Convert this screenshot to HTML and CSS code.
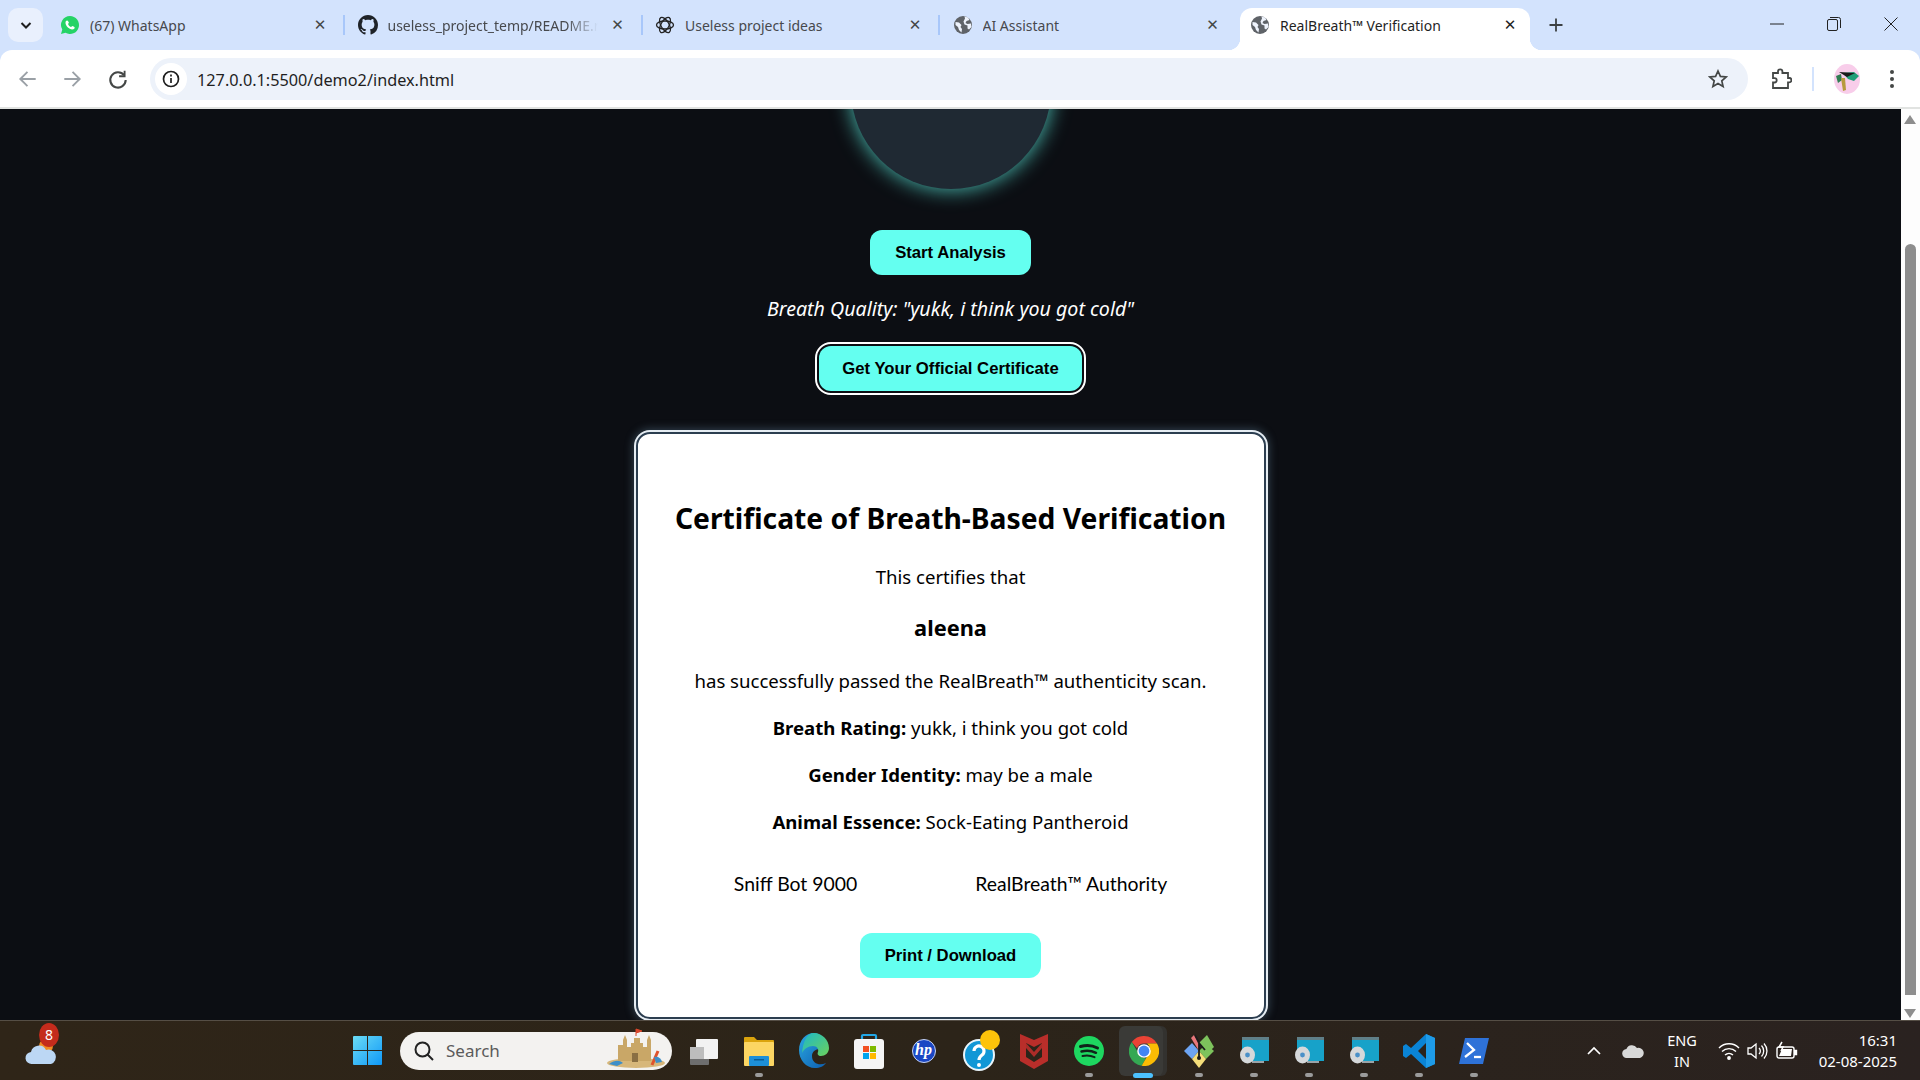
FILE: index.html
```html
<!DOCTYPE html>
<html lang="en">
<head>
  <meta charset="UTF-8">
  <meta name="viewport" content="width=device-width, initial-scale=1.0">
  <title>RealBreath Verification</title>
  <link rel="stylesheet" href="styles.css">
</head>
<body>
  <svg class="defs" width="0" height="0">
    <symbol id="globe" viewBox="0 0 20 20">
      <circle cx="10" cy="10" r="9" fill="#5f6368"/>
      <path d="M2.500 7l3.500.5 2.500 2.500-1 2 1.500 2-.5 3.500-2.500-2.500-1-3-2.500-2zM11.500 1.500l3.500 1 1.500 2.500-3 1-1 2 2 1 3.500-.5.500 3.500-2.500 2.500-1.500-1v-3l-3-1-1-3 1.500-3z" fill="#eef3fc"/>
    </symbol>
    <symbol id="disc" viewBox="0 0 32 32">
      <rect x="4" y="2" width="27" height="24" fill="#17a2c9"/>
      <rect x="4" y="2" width="27" height="3" fill="#5f7f88"/>
      <rect x="14" y="26" width="12" height="2" fill="#9aa3a8"/>
      <ellipse cx="9.500" cy="20" rx="7.500" ry="8.500" fill="#d5d8da"/>
      <circle cx="9.500" cy="20" r="2.400" fill="#4a90c8"/>
    </symbol>
  </svg>

  <div class="tabstrip">
    <button class="tab-search">
      <svg width="14" height="14" viewBox="0 0 14 14"><path d="M2.500 5l4.500 4.500L11.500 5" fill="none" stroke="#1f1f1f" stroke-width="2"/></svg>
    </button>
    <div class="tabs">
      <div class="tab">
        <svg class="favicon" viewBox="0 0 20 20">
          <path d="M10 1a9 9 0 0 0-7.700 13.600L1 19l4.500-1.200A9 9 0 1 0 10 1z" fill="#25d366"/>
          <path d="M7 5.500c-.6 0-1.500.8-1.500 2.300 0 3 3.500 6.700 6.700 6.700 1.500 0 2.500-1 2.500-2 0-.5-2-1.500-2.400-1.500-.4 0-.8 1-1.200 1-.8 0-3-2-3-3 0-.4.800-.8.800-1.200 0-.5-.9-2.300-1.900-2.300z" fill="#fff"/>
        </svg>
        <span class="tab-title">(67) WhatsApp</span>
        <span class="tab-x">✕</span>
      </div>
      <div class="tab">
        <svg class="favicon" viewBox="0 0 16 16"><path fill="#1f2328" d="M8 0C3.580 0 0 3.580 0 8c0 3.540 2.290 6.530 5.470 7.590.4.070.55-.17.55-.38 0-.19-.01-.82-.01-1.490-2.010.37-2.530-.49-2.690-.94-.09-.23-.48-.94-.82-1.130-.28-.15-.68-.52-.01-.53.63-.01 1.080.58 1.230.82.720 1.210 1.870.87 2.330.66.070-.52.28-.87.51-1.070-1.780-.2-3.640-.89-3.640-3.950 0-.87.31-1.590.82-2.150-.08-.2-.36-1.020.08-2.120 0 0 .67-.21 2.200.82.64-.18 1.320-.27 2-.27.68 0 1.360.09 2 .27 1.530-1.040 2.200-.82 2.200-.82.44 1.100.16 1.920.08 2.120.51.56.82 1.270.82 2.150 0 3.070-1.870 3.750-3.650 3.950.29.25.54.73.54 1.480 0 1.070-.01 1.930-.01 2.200 0 .21.15.46.55.38A8.013 8.013 0 0 0 16 8c0-4.420-3.580-8-8-8z"/></svg>
        <span class="tab-title tab-title-fade">useless_project_temp/README.md</span>
        <span class="tab-x">✕</span>
      </div>
      <div class="tab">
        <svg class="favicon" viewBox="0 0 20 20" fill="none" stroke="#222" stroke-width="1.300">
          <ellipse cx="10" cy="10" rx="8.500" ry="4"/>
          <ellipse cx="10" cy="10" rx="8.500" ry="4" transform="rotate(60 10 10)"/>
          <ellipse cx="10" cy="10" rx="8.500" ry="4" transform="rotate(120 10 10)"/>
        </svg>
        <span class="tab-title">Useless project ideas</span>
        <span class="tab-x">✕</span>
      </div>
      <div class="tab">
        <svg class="favicon"><use href="#globe"/></svg>
        <span class="tab-title">AI Assistant</span>
        <span class="tab-x">✕</span>
      </div>
      <div class="tab tab-active">
        <svg class="favicon"><use href="#globe"/></svg>
        <span class="tab-title">RealBreath™ Verification</span>
        <span class="tab-x">✕</span>
      </div>
    </div>
    <svg class="tab-plus" width="16" height="16" viewBox="0 0 16 16"><path d="M8 1.500v13M1.500 8h13" stroke="#3c4043" stroke-width="1.800"/></svg>
    <div class="win-controls">
      <svg width="14" height="14" viewBox="0 0 14 14"><path d="M0 7h14" stroke="#222" stroke-width="1"/></svg>
      <svg width="14" height="14" viewBox="0 0 14 14" fill="none" stroke="#222"><rect x=".5" y="2.500" width="10" height="11" rx="1.500"/><path d="M3 .5h8.500a2 2 0 0 1 2 2V11"/></svg>
      <svg width="14" height="14" viewBox="0 0 14 14"><path d="M.5.5l13 13M13.500.5l-13 13" stroke="#222"/></svg>
    </div>
  </div>

  <div class="toolbar">
    <svg class="tool" viewBox="0 0 20 20" fill="none" stroke="#9aa0a6" stroke-width="1.700"><path d="M17 10H3.500M9.500 3.500L3 10l6.500 6.500"/></svg>
    <svg class="tool" viewBox="0 0 20 20" fill="none" stroke="#9aa0a6" stroke-width="1.700"><path d="M3 10h13.500M10.500 3.500L17 10l-6.500 6.500"/></svg>
    <svg class="tool" viewBox="0 0 20 20" fill="none" stroke="#444746" stroke-width="1.900"><path d="M15.500 6.500A7 7 0 1 0 17 11"/><path d="M16 2.500v5h-5" stroke-width="1.700"/></svg>
    <div class="omnibox">
      <span class="info-chip">
        <svg width="18" height="18" viewBox="0 0 18 18" fill="none" stroke="#1f1f1f" stroke-width="1.700"><circle cx="9" cy="9" r="7.500"/><path d="M9 8v5M9 4.500v2"/></svg>
      </span>
      <span class="url">127.0.0.1:5500/demo2/index.html</span>
      <svg class="star" width="20" height="20" viewBox="0 0 20 20" fill="none" stroke="#444746" stroke-width="1.700"><path d="M10 2l2.400 5.400 5.800.6-4.400 3.900 1.300 5.700-5.100-3-5.100 3 1.300-5.700L1.800 8l5.800-.6z"/></svg>
    </div>
    <svg class="tool tool-ext" viewBox="0 0 22 22" fill="none" stroke="#444746" stroke-width="1.800"><path d="M3 5h5V3.500a2.200 2.200 0 0 1 4.400 0V5H18v5h1.200a2.200 2.200 0 0 1 0 4.400H18V20H3v-5.500h1.500a2.200 2.200 0 0 0 0-4.400H3z"/></svg>
    <span class="tool-sep"></span>
    <svg class="avatar" viewBox="0 0 26 30">
      <ellipse cx="13" cy="15" rx="13" ry="15" fill="#f8cdea"/>
      <path d="M9 9l11-1 5 4-5 5-6-2z" fill="#1f9f78"/>
      <path d="M5 8l16 1-8 4z" fill="#1a1a1a"/>
      <path d="M2 12l5-2 1 6-4 3z" fill="#2f7d52"/>
      <path d="M7 14l2 13 3-1-1-12z" fill="#b89a3c"/>
    </svg>
    <svg class="tool-menu" width="6" height="20" viewBox="0 0 6 20" fill="#444746"><circle cx="3" cy="3" r="2"/><circle cx="3" cy="10" r="2"/><circle cx="3" cy="17" r="2"/></svg>
  </div>

  <div class="viewport">
    <main class="page">
      <div class="breath-circle"></div>
      <button class="btn btn-start">Start Analysis</button>
      <p class="quality">Breath Quality: "yukk, i think you got cold"</p>
      <button class="btn btn-cert">Get Your Official Certificate</button>

      <section class="certificate">
        <h2>Certificate of Breath-Based Verification</h2>
        <p>This certifies that</p>
        <h3>aleena</h3>
        <p>has successfully passed the RealBreath™ authenticity scan.</p>
        <p><strong>Breath Rating:</strong> yukk, i think you got cold</p>
        <p><strong>Gender Identity:</strong> may be a male</p>
        <p><strong>Animal Essence:</strong> Sock-Eating Pantheroid</p>
        <div class="signatures">
          <span>Sniff Bot 9000</span>
          <span>RealBreath™ Authority</span>
        </div>
        <button class="btn btn-print">Print / Download</button>
      </section>
    </main>
    <div class="scrollbar">
      <span class="arrow-up"></span>
      <span class="thumb"></span>
      <span class="arrow-down"></span>
    </div>
  </div>

  <footer class="taskbar">
    <div class="tb-weather">
      <svg width="36" height="36" viewBox="0 0 36 36">
        <circle cx="22" cy="13" r="7" fill="#f08a24"/>
        <path d="M8 31a6 6 0 0 1-1-12 8 8 0 0 1 15-2 7 7 0 0 1 5 14z" fill="#bcd7f4"/>
      </svg>
      <span class="weather-badge">8</span>
    </div>
    <div class="tb-cell">
      <svg width="29" height="29" viewBox="0 0 29 29">
        <defs><linearGradient id="win" x1="0" y1="0" x2="1" y2="1"><stop offset="0" stop-color="#6bdcf5"/><stop offset="1" stop-color="#0f98f8"/></linearGradient></defs>
        <path d="M0 1a1 1 0 0 1 1-1h13v14H0zM15 0h13a1 1 0 0 1 1 1v13H15zM0 15h14v14H1a1 1 0 0 1-1-1zM15 15h14v13a1 1 0 0 1-1 1H15z" fill="url(#win)"/>
      </svg>
    </div>
    <div class="tb-search">
      <svg width="22" height="22" viewBox="0 0 22 22" fill="none" stroke="#222" stroke-width="2"><circle cx="9.500" cy="9.500" r="7"/><path d="M14.500 14.500l5.500 5.500"/></svg>
      <span class="search-label">Search</span>
      <svg class="castle" width="60" height="42" viewBox="0 0 60 42">
        <ellipse cx="30" cy="36" rx="29" ry="5" fill="#d7b77a"/>
        <path d="M3 37c6-4 10-4 14-1l-6 3z" fill="#3e8fc8"/>
        <path d="M12 34V18h5v-5l2-5 2 5v7h4v-4h3v-5h6v5h3v4h4v-7l2-5 2 5v21z" fill="#c9a767"/>
        <rect x="26" y="26" width="6" height="9" fill="#8a6f43"/>
        <path d="M30 9V2l6 2-6 2" fill="#d9472b" stroke="#d9472b"/>
        <path d="M46 38l6-14" stroke="#e0532c" stroke-width="3"/>
        <path d="M48 30c4-1 7 1 8 5l-6 1z" fill="#3e8fc8"/>
      </svg>
    </div>
    <div class="tb-cell">
      <svg width="32" height="32" viewBox="0 0 32 32">
        <rect x="2" y="12" width="19" height="18" rx="1" fill="#6e6e6e"/>
        <rect x="8" y="4" width="22" height="20" rx="1" fill="#f2f2f2"/>
        <rect x="2" y="12" width="14" height="12" fill="#bdbdbd"/>
      </svg>
    </div>
    <div class="tb-cell tb-open">
      <svg width="30" height="32" viewBox="0 0 30 32">
        <path d="M0 3a1 1 0 0 1 1-1h9l3 3h16a1 1 0 0 1 1 1v6H0z" fill="#dba40d"/>
        <rect y="7" width="30" height="24" rx="1" fill="#fcd663"/>
        <rect x="5" y="21" width="20" height="10" rx="1" fill="#1d8fd8"/>
        <rect x="10" y="24" width="10" height="1.500" fill="#0b5c94"/>
      </svg>
    </div>
    <div class="tb-cell">
      <svg width="30" height="37" viewBox="0 0 30 37">
        <defs>
          <linearGradient id="edge" x1="0" y1="0" x2="1" y2="1"><stop offset="0" stop-color="#2ba7e2"/><stop offset="1" stop-color="#0d5fb0"/></linearGradient>
          <linearGradient id="edge2" x1="0" y1="0" x2="1" y2="1"><stop offset="0" stop-color="#1cb8c8"/><stop offset="1" stop-color="#6cd25c"/></linearGradient>
        </defs>
        <path d="M15 1C7 1 0 8 0 18c0 10 7 18 16 18 5 0 9-2 11-5-6 3-14 1-14-7 0-4 3-7 8-7 3 0 4 1 4-2C25 7 21 1 15 1z" fill="url(#edge)"/>
        <path d="M15 1c8 0 15 7 15 15 0 5-4 8-8 8-3 0-4-2-3-4 1-3-1-6-5-6-5 0-9 3-11 7C4 9 8 1 15 1z" fill="url(#edge2)"/>
      </svg>
    </div>
    <div class="tb-cell">
      <svg width="30" height="36" viewBox="0 0 30 36">
        <path d="M8 8V3a1 1 0 0 1 1-1h12a1 1 0 0 1 1 1v5" fill="none" stroke="#22a7e6" stroke-width="2.200"/>
        <rect y="6" width="30" height="30" rx="3" fill="#f5f5f5"/>
        <rect x="9" y="13" width="6" height="6" fill="#f25022"/><rect x="16" y="13" width="6" height="6" fill="#7fba00"/>
        <rect x="9" y="20" width="6" height="6" fill="#00a4ef"/><rect x="16" y="20" width="6" height="6" fill="#ffb900"/>
      </svg>
    </div>
    <div class="tb-cell">
      <span class="hp-logo">hp</span>
    </div>
    <div class="tb-cell">
      <svg class="help-icon" width="40" height="44" viewBox="0 0 40 44">
        <circle cx="16" cy="26" r="15" fill="#1197d6" stroke="#e9f4fa" stroke-width="2"/>
        <path d="M11 22a5 5 0 1 1 8 4c-2 1.500-3 2.500-3 5" fill="none" stroke="#fff" stroke-width="3.200"/>
        <circle cx="16" cy="36" r="2" fill="#fff"/>
        <circle cx="27" cy="11" r="10" fill="#fdc30a"/>
      </svg>
    </div>
    <div class="tb-cell">
      <svg width="28" height="36" viewBox="0 0 28 36">
        <path d="M0 1l14 6 14-6v27l-14 8-14-8z" fill="#b92e2a"/>
        <path d="M6 10l8 4 8-4v14l-8 5-8-5z" fill="#2b2419"/>
        <path d="M6 10l8 9 8-9v5l-8 9-8-9z" fill="#b92e2a" opacity=".9"/>
      </svg>
    </div>
    <div class="tb-cell tb-open">
      <svg width="30" height="30" viewBox="0 0 30 30" fill="none" stroke="#10231a" stroke-linecap="round">
        <circle cx="15" cy="15" r="15" fill="#1ed760" stroke="none"/>
        <path d="M6.500 10.500c6-1.700 12-1.200 17 1.500" stroke-width="3"/>
        <path d="M7.500 15.500c5-1.300 10-.9 14.500 1.300" stroke-width="2.500"/>
        <path d="M8.500 20c4-1 8-.7 12 1.200" stroke-width="2"/>
      </svg>
    </div>
    <div class="tb-cell tb-active">
      <svg width="30" height="30" viewBox="0 0 30 30">
        <path d="M15 0a15 15 0 0 1 13 7.500H15a7.500 7.500 0 0 0-7 4.800L2.800 6A15 15 0 0 1 15 0z" fill="#ea4335"/>
        <path d="M2.800 6L9 16.500A7.500 7.500 0 0 0 17 22.200L12.600 29.800A15 15 0 0 1 2.800 6z" fill="#34a853"/>
        <path d="M28 7.500A15 15 0 0 1 12.600 29.800L19 19a7.500 7.500 0 0 0-1-11.500z" fill="#fbbc04"/>
        <circle cx="15" cy="15" r="6.800" fill="#fff"/><circle cx="15" cy="15" r="5.400" fill="#4285f4"/>
      </svg>
    </div>
    <div class="tb-cell tb-open">
      <svg width="30" height="36" viewBox="0 0 30 36">
        <path d="M15 10l8-8 7 12-7 7z" fill="#7dc25c"/>
        <path d="M15 10l-5-8-3 3 8 13z" fill="#e8777b"/>
        <path d="M0 18l8-8 7 8-7 8z" fill="#6da4f2"/>
        <path d="M15 18l7-7 8 7-8 8z" fill="#7dc25c"/>
        <path d="M8 26l7-8 7 8-7 9z" fill="#f5de7a"/>
        <path d="M11 2l4 8M15 10v15M15 10l6 7" stroke="#1a1a1a" stroke-width="1.800" fill="none"/>
        <circle cx="15" cy="25" r="2" fill="#1a1a1a"/>
      </svg>
    </div>
    <div class="tb-cell tb-open"><svg width="32" height="32"><use href="#disc"/></svg></div>
    <div class="tb-cell tb-open"><svg width="32" height="32"><use href="#disc"/></svg></div>
    <div class="tb-cell tb-open"><svg width="32" height="32"><use href="#disc"/></svg></div>
    <div class="tb-cell tb-open">
      <svg width="32" height="34" viewBox="0 0 32 34">
        <path d="M23 0l9 4v26l-9 4L8 20l-5 4-3-2v-10l3-2 5 4zM23 9l-8 8 8 8z" fill="#0a84d6"/>
        <path d="M23 0l9 4v26l-9 4z" fill="#1e9be8"/>
      </svg>
    </div>
    <div class="tb-cell tb-open">
      <svg width="30" height="26" viewBox="0 0 30 26">
        <path d="M6 0h24l-6 26H0z" fill="#2e72d8"/>
        <path d="M8 5l7 7-9 7" fill="none" stroke="#fff" stroke-width="2.300"/>
        <path d="M15 19h7" stroke="#fff" stroke-width="2.300"/>
      </svg>
    </div>

    <div class="tray">
      <div class="tray-cell tray-chevron">
        <svg width="16" height="10" viewBox="0 0 16 10" fill="none" stroke="#fff" stroke-width="1.700"><path d="M2 8l6-6 6 6"/></svg>
      </div>
      <div class="tray-cell tray-cloud">
        <svg width="22" height="14" viewBox="0 0 22 14"><path d="M5 14a4.500 4.500 0 0 1-.6-9A6 6 0 0 1 15 4a5 5 0 0 1 3 10z" fill="#d8d8d8"/></svg>
      </div>
      <div class="tray-cell tray-lang"><span>ENG</span><span>IN</span></div>
      <div class="tray-cell tray-icon">
        <svg width="22" height="18" viewBox="0 0 22 18" fill="none" stroke="#fff" stroke-width="1.400"><path d="M1 6a14 14 0 0 1 20 0M4 9.500a10 10 0 0 1 14 0M7 13a6 6 0 0 1 8 0"/><circle cx="11" cy="16" r="1.200" fill="#fff"/></svg>
      </div>
      <div class="tray-cell tray-icon">
        <svg width="22" height="18" viewBox="0 0 22 18" fill="none" stroke="#fff" stroke-width="1.300"><path d="M1 6h3l5-4v14l-5-4H1z"/><path d="M12 6a4 4 0 0 1 0 6M14.500 3.500a8 8 0 0 1 0 11M17 1.500a11 11 0 0 1 0 15"/></svg>
      </div>
      <div class="tray-cell tray-icon">
        <svg width="22" height="20" viewBox="0 0 22 20" fill="none" stroke="#fff" stroke-width="1.400"><rect x="1" y="6" width="17" height="11" rx="2"/><path d="M18 9.500h2.500v4H18" fill="#fff"/><path d="M3 15l3-7h10l-1 7z" fill="#fff" stroke="none"/><path d="M6 1L3 6h4l-2 4" stroke-width="1.500"/></svg>
      </div>
      <div class="tray-clock"><span>16:31</span><span>02-08-2025</span></div>
    </div>
  </footer>
</body>
</html>
```

FILE: styles.css
```css
* {
  box-sizing: border-box;
}
html, body {
  margin: 0;
  height: 100%;
  overflow: hidden;
}
body {
  display: flex;
  flex-direction: column;
  width: 1920px;
  height: 1080px;
  font-family: 'Noto Sans', sans-serif;
  background-color: #d3e3fd;
}
.defs {
  position: absolute;
}

/* tab strip */
.tabstrip {
  display: flex;
  align-items: flex-end;
  height: 50px;
  flex: none;
}
.tab-search {
  align-self: flex-start;
  width: 35px;
  height: 34px;
  margin: 8px 7px 0 8px;
  padding: 0;
  border: 0;
  border-radius: 10px;
  background-color: #e9f0fd;
  display: flex;
  align-items: center;
  justify-content: center;
}
.tabs {
  display: flex;
  gap: 7.5px;
}
.tab {
  position: relative;
  display: flex;
  align-items: center;
  width: 290px;
  height: 42px;
  padding: 0 10px 8px;
  color: #47494d;
  font-size: 14px;
}
.tab:not(.tab-active):not(:nth-child(4))::after {
  content: '';
  position: absolute;
  right: -5px;
  top: 7px;
  width: 2px;
  height: 20px;
  background-color: #a8c7fa;
}
.tab-active {
  background-color: #fff;
  border-radius: 12px 12px 0 0;
  color: #1f1f1f;
}
.tab-active::before,
.tab-active::after {
  content: '';
  position: absolute;
  bottom: 0;
  width: 12px;
  height: 12px;
}
.tab-active::before {
  left: -12px;
  background: radial-gradient(circle at 0 0, transparent 12px, #fff 12.500px);
}
.tab-active::after {
  right: -12px;
  background: radial-gradient(circle at 100% 0, transparent 12px, #fff 12.500px);
}
.favicon {
  width: 20px;
  height: 20px;
  flex: none;
  margin-right: 10px;
}
.tab-title {
  flex: 1;
  overflow: hidden;
  white-space: nowrap;
}
.tab-title-fade {
  -webkit-mask-image: linear-gradient(to right, #000 85%, transparent 100%);
  mask-image: linear-gradient(to right, #000 85%, transparent 100%);
}
.tab-x {
  width: 20px;
  margin-left: 10px;
  text-align: center;
  font-size: 15px;
  color: #444746;
  font-family: 'DejaVu Sans', sans-serif;
}
.tab-active .tab-x {
  color: #1f1f1f;
}
.tab-plus {
  margin: 0 0 17px 18px;
}
.win-controls {
  display: flex;
  gap: 43px;
  align-items: center;
  align-self: flex-start;
  margin: 17px 22px 0 auto;
}

/* address bar */
.toolbar {
  display: flex;
  align-items: center;
  height: 59px;
  flex: none;
  padding: 1px 0 0 17px;
  background-color: #fff;
  border-radius: 12px 12px 0 0;
  border-bottom: 2px solid #e1e3e1;
}
.tool {
  width: 22px;
  height: 22px;
  flex: none;
  margin-right: 22px;
}
.tool:nth-child(2) {
  margin-right: 24px;
}
.omnibox {
  display: flex;
  align-items: center;
  width: 1598px;
  height: 42px;
  padding: 0 20px 0 5px;
  background-color: #edf2fa;
  border-radius: 21px;
  flex: none;
  margin-left: -1px;
}
.info-chip {
  display: flex;
  align-items: center;
  justify-content: center;
  width: 32px;
  height: 32px;
  border-radius: 50%;
  background-color: #fff;
}
.url {
  flex: 1;
  margin-left: 10px;
  padding-top: 1px;
  font-size: 16.250px;
  color: #1f1f1f;
}
.tool-ext {
  margin: 0 20px 0 22px;
}
.tool-sep {
  width: 2px;
  height: 24px;
  background-color: #d3e3fd;
}
.avatar {
  width: 26px;
  height: 30px;
  margin-left: 20px;
}
.tool-menu {
  margin-left: 29px;
}

/* page */
.viewport {
  display: flex;
  height: 911px;
  flex: none;
  background-color: #0c0e13;
  overflow: hidden;
}
.page {
  display: flex;
  flex-direction: column;
  align-items: center;
  width: 1901px;
  flex: none;
  color: #fff;
}
.breath-circle {
  width: 200px;
  height: 200px;
  flex: none;
  margin-top: -120px;
  border-radius: 50%;
  background-color: #1f2933;
  box-shadow: 0 0 20px 1px rgba(100, 255, 240, 0.7);
}
.btn {
  border: 0;
  border-radius: 12px;
  background-color: #64fff0;
  color: #000;
  font-family: 'Liberation Sans', sans-serif;
  font-size: 16.700px;
  font-weight: bold;
  height: 45px;
  flex: none;
}
.btn-start {
  width: 161px;
  margin-top: 41px;
}
.quality {
  margin: 19px 0 0;
  font-size: 19.600px;
  font-style: italic;
  line-height: 30px;
}
.btn-cert {
  width: 263px;
  margin-top: 22px;
  outline: 2px solid #fff;
  outline-offset: 2px;
}
.certificate {
  display: flex;
  flex-direction: column;
  align-items: center;
  width: 630px;
  height: 587px;
  margin-top: 41px;
  padding-top: 64px;
  background-color: #fff;
  border: 2px solid #2c3e50;
  border-radius: 14px;
  box-shadow: 0 0 0 2px #e6edf3, 0 0 8px 3px rgba(120, 160, 190, 0.35);
  color: #000;
  flex-shrink: 0;
}
.certificate h2 {
  margin: 0 0 6px;
  font-size: 28.250px;
  line-height: 40px;
}
.certificate p {
  margin: 18px 0 0;
  font-size: 18.600px;
  line-height: 29px;
}
.certificate h3 {
  margin: 22px 0 5px;
  font-size: 21.800px;
  line-height: 30px;
}
.signatures {
  display: flex;
  gap: 118px;
  margin-top: 34px;
  font-family: 'Lato', sans-serif;
  font-size: 19.400px;
  line-height: 28px;
}
.btn-print {
  width: 181px;
  margin-top: 35px;
}

/* scrollbar */
.scrollbar {
  position: relative;
  flex: 1;
  background-color: #fdfdfd;
}
.arrow-up,
.arrow-down {
  position: absolute;
  left: 3px;
  width: 0;
  height: 0;
  border-left: 6px solid transparent;
  border-right: 6px solid transparent;
}
.arrow-up {
  top: 6px;
  border-bottom: 9px solid #8d8d8d;
}
.arrow-down {
  bottom: 2px;
  border-top: 9px solid #8d8d8d;
}
.thumb {
  position: absolute;
  top: 135px;
  left: 4px;
  width: 11px;
  height: 751px;
  border-radius: 6px 6px 0 0;
  background-color: #8d8d8d;
}

/* taskbar */
.taskbar {
  display: flex;
  align-items: center;
  height: 60px;
  flex: none;
  background: linear-gradient(to right, #2f2518, #2c2419 50%, #2a2220);
  border-top: 1px solid #554e45;
  color: #fff;
}
.tb-weather {
  position: relative;
  width: 340px;
  flex: none;
  padding-left: 24px;
  height: 36px;
}
.weather-badge {
  position: absolute;
  left: 39px;
  top: -10px;
  width: 20px;
  height: 24px;
  border-radius: 50%;
  background-color: #c42b1c;
  font-size: 14px;
  line-height: 24px;
  text-align: center;
}
.tb-cell {
  position: relative;
  display: flex;
  align-items: center;
  justify-content: center;
  width: 55px;
  height: 59px;
  flex: none;
}
.tb-open::after {
  content: '';
  position: absolute;
  left: 24px;
  bottom: 3px;
  width: 8px;
  height: 4px;
  border-radius: 2px;
  background-color: #9b9b9b;
}
.tb-active::before {
  content: '';
  position: absolute;
  left: 3px;
  top: 5px;
  width: 44px;
  height: 50px;
  border-radius: 6px;
  background-color: #3a3a37;
  box-shadow: 4px 0 0 #33322f;
}
.tb-active svg {
  position: relative;
}
.tb-active::after {
  content: '';
  position: absolute;
  left: 17px;
  bottom: 2px;
  width: 20px;
  height: 5px;
  border-radius: 3px;
  background-color: #4cc2ff;
}
.tb-search {
  display: flex;
  align-items: center;
  width: 272px;
  height: 38px;
  flex: none;
  margin: 0 4px 0 5px;
  padding: 0 6px 0 13px;
  background-color: #f3f2f0;
  border-radius: 19px;
}
.search-label {
  flex: 1;
  margin-left: 11px;
  color: #5b5b5b;
  font-size: 17px;
}
.castle {
  margin-top: -6px;
}
.hp-logo {
  display: block;
  width: 24px;
  height: 24px;
  border-radius: 50%;
  background-color: #1a47c4;
  border: 1px solid #c7d3f2;
  font-family: 'Liberation Serif', serif;
  font-style: italic;
  font-weight: bold;
  font-size: 16px;
  line-height: 20px;
  text-align: center;
}
.help-icon {
  margin-left: 9px;
}
.tray {
  display: flex;
  align-items: center;
  margin-left: auto;
  padding-right: 23px;
}
.tray-cell {
  display: flex;
  align-items: center;
  justify-content: center;
  flex: none;
}
.tray-chevron {
  width: 36px;
}
.tray-cloud {
  width: 41px;
  margin-right: 4px;
}
.tray-lang {
  flex-direction: column;
  width: 50px;
  margin-right: 7px;
  font-size: 14.500px;
  line-height: 21px;
}
.tray-icon {
  width: 29px;
}
.tray-clock {
  display: flex;
  flex-direction: column;
  align-items: flex-end;
  width: 96px;
  font-size: 15px;
  line-height: 21px;
}
```
